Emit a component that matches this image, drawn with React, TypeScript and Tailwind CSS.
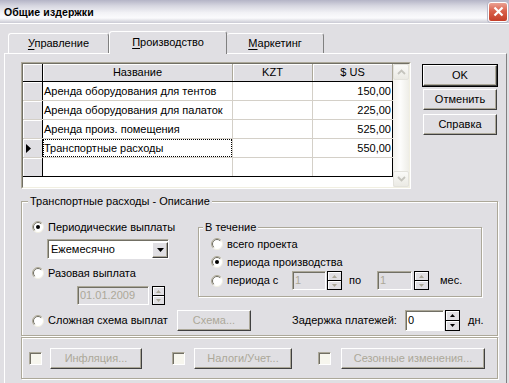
import React from 'react';

const raised =
  'border border-t-white border-l-white border-r-[#404040] border-b-[#404040] shadow-[inset_-1px_-1px_0_#aca899]';
const sunkenOuter = 'border border-t-[#aca899] border-l-[#aca899] border-r-white border-b-white';
const sunkenInner = 'border border-t-[#716f64] border-l-[#716f64] border-r-[#f1efe2] border-b-[#f1efe2]';
const etched = 'border border-[#aca899] shadow-[inset_1px_1px_0_#fff,1px_1px_0_#fff]';

function Radio({ checked }: { checked?: boolean }) {
  return (
    <svg width="12" height="12" viewBox="0 0 12 12" className="shrink-0">
      <circle cx="6" cy="6" r="5.5" fill="#fff" stroke="#f1efe2" />
      <path d="M2.1 9.9A5.5 5.5 0 0 1 9.9 2.1" fill="none" stroke="#aca899" />
      <path d="M2.8 9.2A4.5 4.5 0 0 1 9.2 2.8" fill="none" stroke="#716f64" />
      {checked && <circle cx="6" cy="6" r="2" fill="#000" />}
    </svg>
  );
}

function RadioRow({ label, checked, className = '' }: { label: string; checked?: boolean; className?: string }) {
  return (
    <div className={`flex items-center gap-[4px] ${className}`}>
      <Radio checked={checked} />
      <span>{label}</span>
    </div>
  );
}

function Check() {
  return (
    <div className={`w-[13px] h-[13px] shrink-0 ${sunkenOuter} shadow-[inset_1px_1px_0_#716f64] bg-[#f7f6ee]`} />
  );
}

function Btn({ label, disabled, className = '' }: { label: React.ReactNode; disabled?: boolean; className?: string }) {
  return (
    <div
      className={`flex items-center justify-center shrink-0 ${raised} ${disabled ? 'text-[#aca899]' : 'text-black'} ${className}`}
    >
      {label}
    </div>
  );
}

function Edit({ value, disabled, className = '' }: { value: string; disabled?: boolean; className?: string }) {
  return (
    <div
      className={`flex items-center pl-[2px] shrink-0 ${sunkenOuter} shadow-[inset_1px_1px_0_#716f64] ${
        disabled ? 'bg-[#e0dfe3] text-[#aca899]' : 'bg-white text-black'
      } ${className}`}
    >
      {value}
    </div>
  );
}

function Spin({ disabled, className = '' }: { disabled?: boolean; className?: string }) {
  const c = disabled ? '#aca899' : '#000';
  return (
    <div className={`flex flex-col shrink-0 border border-black bg-[#e0dfe3] ${className}`}>
      <div className="flex-1 flex items-center justify-center border-b border-black shadow-[inset_1px_1px_0_#fff]">
        <svg width="5" height="3" viewBox="0 0 5 3">
          <path d="M2.5 0L5 3H0z" fill={c} />
        </svg>
      </div>
      <div className="flex-1 flex items-center justify-center shadow-[inset_1px_1px_0_#fff]">
        <svg width="5" height="3" viewBox="0 0 5 3">
          <path d="M0 0H5L2.5 3z" fill={c} />
        </svg>
      </div>
    </div>
  );
}

function Chevron({ up }: { up?: boolean }) {
  return (
    <div className="h-[16px] flex items-center justify-center rounded-[2px] border border-[#e3e2dc] bg-[linear-gradient(to_bottom,#fafaf8,#ebeae4)]">
      <svg width="9" height="6" viewBox="0 0 9 6">
        <path d={up ? 'M1 5L4.5 1.5L8 5' : 'M1 1L4.5 4.5L8 1'} fill="none" stroke="#c5c4bd" strokeWidth="1.8" />
      </svg>
    </div>
  );
}

const rows = [
  { name: 'Аренда оборудования для тентов', kzt: '', usd: '150,00' },
  { name: 'Аренда оборудования для палаток', kzt: '', usd: '225,00' },
  { name: 'Аренда произ. помещения', kzt: '', usd: '525,00' },
  { name: 'Транспортные расходы', kzt: '', usd: '550,00', current: true },
  { name: '', kzt: '', usd: '' },
];

function Grid() {
  return (
    <div className={`w-[390px] h-[127px] shrink-0 ${sunkenOuter}`}>
      <div className={`h-full flex ${sunkenInner} bg-white`}>
        <div className="w-[370px] flex flex-col">
          <div className="h-[18px] flex border-b border-black bg-[#e0dfe3]">
            <div className="w-[20px] border-r border-black shadow-[inset_1px_1px_0_#fff]" />
            <div className="w-[190px] flex items-center justify-center border-r border-[#aca899] shadow-[inset_1px_1px_0_#fff]">
              Название
            </div>
            <div className="w-[80px] flex items-center justify-center border-r border-[#aca899] shadow-[inset_1px_1px_0_#fff]">
              KZT
            </div>
            <div className="w-[80px] flex items-center justify-center border-r border-[#aca899] shadow-[inset_1px_1px_0_#fff]">
              $ US
            </div>
          </div>
          {rows.map((r, i) => (
            <div
              key={i}
              className={`h-[19px] flex border-b ${i === rows.length - 1 ? 'border-black' : 'border-[#d4d0c8]'}`}
            >
              <div className="w-[20px] flex items-center pl-[3px] border-r border-black bg-[#e0dfe3] shadow-[inset_1px_1px_0_#fff]">
                {r.current && (
                  <svg width="5" height="9" viewBox="0 0 5 9">
                    <path d="M0 0L5 4.5L0 9z" fill="#000" />
                  </svg>
                )}
              </div>
              <div className="w-[190px] border-r border-[#d4d0c8]">
                <div
                  className={`h-full flex items-center whitespace-nowrap overflow-hidden ${
                    r.current ? 'border border-dotted border-black' : 'pl-[1px]'
                  }`}
                >
                  {r.name}
                </div>
              </div>
              <div className="w-[80px] flex items-center justify-end pr-[1px] border-r border-[#d4d0c8]">{r.kzt}</div>
              <div className="w-[80px] flex items-center justify-end pr-[1px] border-r border-black">{r.usd}</div>
            </div>
          ))}
        </div>
        <div className="w-[16px] flex flex-col bg-[linear-gradient(to_right,#f2f1ec,#fdfdfc_45%,#eeede7)]">
          <Chevron up />
          <div className="flex-1" />
          <Chevron />
        </div>
      </div>
    </div>
  );
}

export default function App() {
  return (
    <div className="w-[509px] h-[383px] overflow-hidden flex flex-col bg-[#e0dfe3] text-black text-[11px] leading-[13px] font-['Liberation_Sans',Arial,sans-serif] select-none">
      {/* title bar */}
      <div className="h-[24px] shrink-0 flex items-center pl-[4px] border-b border-white bg-[linear-gradient(to_bottom,#b4b4c6_0%,#d6d6e0_25%,#f2f2f6_55%,#fbfbfd_78%,#c9c9d3_100%)]">
        <span className="font-bold text-[10.5px] tracking-[0.1px] pt-[2px]">Общие издержки</span>
        <div className="ml-auto mr-[1px] w-[20px] h-[20px] rounded-[3px] border border-white bg-[linear-gradient(to_bottom,#eba193,#d9604b_45%,#c43e29)] flex items-center justify-center shadow-[0_0_0_1px_#b8b8c8]">
          <svg width="11" height="11" viewBox="0 0 11 11">
            <path d="M1.5 1.5l8 8M9.5 1.5l-8 8" stroke="#fff" strokeWidth="2.2" />
          </svg>
        </div>
      </div>

      {/* tabs */}
      <div className="relative z-10 mt-[7px] h-[22px] shrink-0 flex items-end pl-[8px]">
        <div className="w-[101px] h-[20px] flex items-center justify-center rounded-t-[3px] border-l border-t border-white border-r border-r-[#808080]">
          <span>
            <span className="underline underline-offset-2">У</span>правление
          </span>
        </div>
        <div className="w-[118px] h-[23px] -mb-[1px] flex items-center justify-center pb-[2px] rounded-t-[3px] bg-[#e0dfe3] border-l border-t border-white border-r border-r-[#808080]">
          <span>
            <span className="underline underline-offset-2">П</span>роизводство
          </span>
        </div>
        <div className="w-[97px] h-[20px] flex items-center justify-center rounded-t-[3px] border-t border-white border-r border-r-[#808080]">
          <span>
            <span className="underline underline-offset-2">М</span>аркетинг
          </span>
        </div>
      </div>

      {/* tab page */}
      <div className="ml-[4px] w-[503px] flex-1 flex flex-col pl-[16px] pt-[8px] border-l border-t border-white border-r border-r-[#808080]">
        <div className="flex items-start">
          <Grid />
          <div className="ml-[11px] mt-[2px] flex flex-col">
            <div className="w-[76px] h-[23px] border border-black flex">
              <Btn label="OK" className="flex-1" />
            </div>
            <Btn label="Отменить" className="ml-[1px] mt-[2px] w-[74px] h-[21px]" />
            <Btn label="Справка" className="ml-[1px] mt-[4px] w-[74px] h-[21px]" />
          </div>
        </div>

        {/* description group */}
        <div className={`relative mt-[12px] w-[477px] h-[135px] shrink-0 pl-[10px] pt-[18px] ${etched}`}>
          <span className="absolute left-[6px] -top-[7px] px-[2px] bg-[#e0dfe3]">Транспортные расходы - Описание</span>

          <div className="h-[90px] flex items-start">
            <div className="w-[166px] flex flex-col">
              <RadioRow label="Периодические выплаты" checked className="h-[14px]" />
              <div className={`ml-[15px] mt-[5px] w-[122px] h-[20px] flex items-center ${sunkenOuter} bg-white`}>
                <div className={`h-full flex-1 flex items-center pl-[2px] ${sunkenInner} border-r-0 border-b-0`}>
                  <span className="flex-1">Ежемесячно</span>
                  <div className={`w-[16px] h-[16px] flex items-center justify-center bg-[#e0dfe3] ${raised}`}>
                    <svg width="7" height="4" viewBox="0 0 7 4">
                      <path d="M0 0H7L3.5 4z" fill="#000" />
                    </svg>
                  </div>
                </div>
              </div>
              <RadioRow label="Разовая выплата" className="mt-[7px] h-[14px]" />
              <div className="ml-[45px] mt-[6px] flex">
                <Edit value="01.01.2009" disabled className="w-[72px] h-[19px]" />
                <Spin disabled className="ml-[3px] w-[13px] h-[19px]" />
              </div>
            </div>

            <div className={`relative mt-[7px] w-[284px] h-[70px] pl-[12px] pt-[7px] ${etched}`}>
              <span className="absolute left-[4px] -top-[7px] px-[2px] bg-[#e0dfe3]">В течение</span>
              <RadioRow label="всего проекта" className="h-[18px]" />
              <RadioRow label="периода производства" checked className="h-[18px]" />
              <div className="h-[19px] flex items-center">
                <Radio />
                <span className="ml-[4px] w-[65px]">периода с</span>
                <Edit value="1" disabled className="w-[34px] h-[19px]" />
                <Spin disabled className="ml-[1px] w-[15px] h-[19px]" />
                <span className="ml-[7px] w-[28px]">по</span>
                <Edit value="1" disabled className="w-[35px] h-[19px]" />
                <Spin disabled className="ml-[2px] w-[15px] h-[19px]" />
                <span className="ml-[11px]">мес.</span>
              </div>
            </div>
          </div>

          <div className="h-[21px] flex items-center">
            <RadioRow label="Сложная схема выплат" className="w-[145px]" />
            <Btn label="Схема..." disabled className="w-[74px] h-[21px]" />
            <span className="ml-[41px] w-[113px]">Задержка платежей:</span>
            <Edit value="0" className="w-[39px] h-[21px]" />
            <Spin className="ml-[1px] w-[15px] h-[21px]" />
            <span className="ml-[8px]">дн.</span>
          </div>
        </div>

        {/* options bar */}
        <div className={`mt-[1px] w-[477px] h-[42px] shrink-0 flex items-center pl-[7px] ${etched}`}>
          <Check />
          <Btn label="Инфляция..." disabled className="ml-[8px] w-[92px] h-[21px]" />
          <div className="ml-[30px]">
            <Check />
          </div>
          <Btn label="Налоги/Учет..." disabled className="ml-[9px] w-[98px] h-[21px]" />
          <div className="ml-[26px]">
            <Check />
          </div>
          <Btn label="Сезонные изменения..." disabled className="ml-[10px] w-[144px] h-[21px]" />
        </div>
      </div>
    </div>
  );
}
